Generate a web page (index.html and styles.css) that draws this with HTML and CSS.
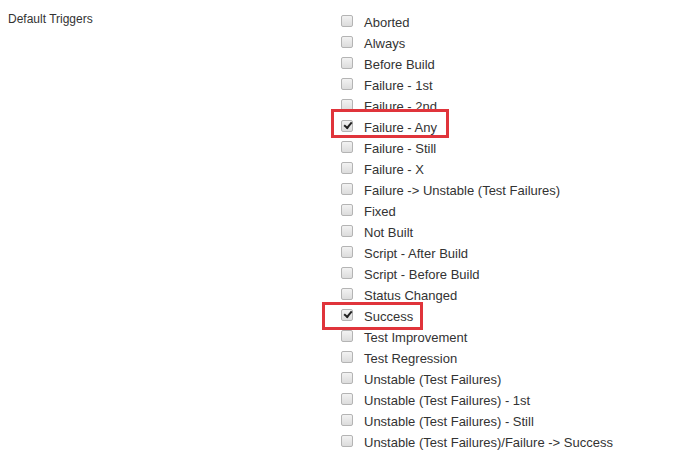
FILE: index.html
```html
<!DOCTYPE html>
<html lang="en">
<head>
  <meta charset="UTF-8" />
  <title>Default Triggers</title>
  <link rel="stylesheet" href="styles.css">
</head>
<body>
  <div class="field">
    <div class="field-label">Default Triggers</div>
    <ul class="triggers">
      <li><span class="box"></span>Aborted</li>
      <li><span class="box"></span>Always</li>
      <li><span class="box"></span>Before Build</li>
      <li><span class="box"></span>Failure - 1st</li>
      <li><span class="box"></span>Failure - 2nd</li>
      <li class="marked marked-any"><span class="box checked"></span>Failure - Any</li>
      <li><span class="box"></span>Failure - Still</li>
      <li><span class="box"></span>Failure - X</li>
      <li><span class="box"></span>Failure -&gt; Unstable (Test Failures)</li>
      <li><span class="box"></span>Fixed</li>
      <li><span class="box"></span>Not Built</li>
      <li><span class="box"></span>Script - After Build</li>
      <li><span class="box"></span>Script - Before Build</li>
      <li><span class="box"></span>Status Changed</li>
      <li class="marked marked-success"><span class="box checked"></span>Success</li>
      <li><span class="box"></span>Test Improvement</li>
      <li><span class="box"></span>Test Regression</li>
      <li><span class="box"></span>Unstable (Test Failures)</li>
      <li><span class="box"></span>Unstable (Test Failures) - 1st</li>
      <li><span class="box"></span>Unstable (Test Failures) - Still</li>
      <li><span class="box"></span>Unstable (Test Failures)/Failure -&gt; Success</li>
    </ul>
  </div>
</body>
</html>
```

FILE: styles.css
```css
body {
  margin: 0;
  background-color: white;
  font-family: "Liberation Sans", Arial, sans-serif;
  color: #333;
}

.field {
  display: flex;
  padding: 12px 8px 0 8px;
}

.field-label {
  width: 333px;
  font-size: 12px;
  line-height: 14px;
}

.triggers {
  list-style: none;
  margin: 0;
  padding: 0;
}

.triggers li {
  position: relative;
  display: flex;
  align-items: center;
  height: 21px;
  font-size: 13px;
  line-height: 21px;
}

.box {
  box-sizing: border-box;
  width: 12px;
  height: 12px;
  margin-right: 11px;
  margin-top: -4px;
  border: 1px solid #b4b4b4;
  border-radius: 2px;
  background: linear-gradient(#f2f2f2, #dcdcdc);
  position: relative;
}

.box.checked::after {
  content: "";
  position: absolute;
  left: 2px;
  top: 1px;
  width: 6px;
  height: 3px;
  border-left: 2px solid #222;
  border-bottom: 2px solid #222;
  transform: rotate(-50deg);
}

.marked::before {
  content: "";
  position: absolute;
  border: 3px solid #e0343b;
  box-sizing: border-box;
}

.marked-any::before {
  left: -10px;
  top: -8px;
  width: 118px;
  height: 29px;
}

.marked-success::before {
  left: -19px;
  top: -4px;
  width: 101px;
  height: 28px;
}
```
